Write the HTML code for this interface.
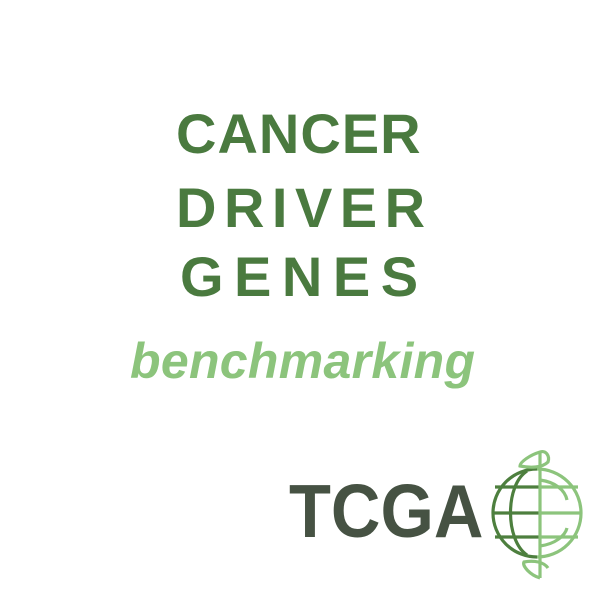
<!DOCTYPE html>
<html><head><style>
html,body{margin:0;padding:0;background:#fff;width:600px;height:600px;overflow:hidden}
.t{position:absolute;white-space:nowrap;font-family:"Liberation Sans",sans-serif;font-weight:bold}
.h{font-size:56px;line-height:56px;color:#4a7a3f}
</style></head><body>
<div class="t h" style="left:176px;top:105.6px;letter-spacing:1px">CANCER</div>
<div class="t h" style="left:176px;top:179.6px;letter-spacing:7.5px">DRIVER</div>
<div class="t h" style="left:180px;top:248.6px;letter-spacing:10.5px">GENES</div>
<div class="t" style="left:130px;top:335.7px;font-size:50px;line-height:50px;font-style:italic;color:#8cc47c;letter-spacing:0.3px">benchmarking</div>
<div class="t" style="left:289px;top:473.5px;font-size:75px;line-height:75px;color:#465243;transform:scaleX(0.915);transform-origin:left top">TCGA</div>
<svg style="position:absolute;left:0;top:0" width="600" height="600" fill="none" stroke-width="3.2">
<g stroke="#4d7f3e">
<path d="M537 469 A44 44 0 0 0 537 557"/>
<path d="M527 471 C505 485 505 540 527 555"/>
<path d="M495 487 L540 487 M493 513 L540 513 M495 537 L540 537"/>
</g>
<g stroke="#8cc47c">
<path d="M537 469 A44 44 0 0 1 537 557"/>
<path d="M540 487 L578 487 M540 513 L582 513 M540 537 L578 537"/>
<path d="M540 480 C555 482 565 490 567 500 M540 546 C555 544 565 536 567 528"/>
<path d="M540 452 L540 578"/>
<path d="M540 452 C530 455 520 462 520 466 C530 468 542 468 548 462 C550 456 546 450 540 452"/>
<path d="M540 578 C530 575 522 566 524 562 C534 560 544 562 548 568"/>
</g>
</svg>
</body></html>
